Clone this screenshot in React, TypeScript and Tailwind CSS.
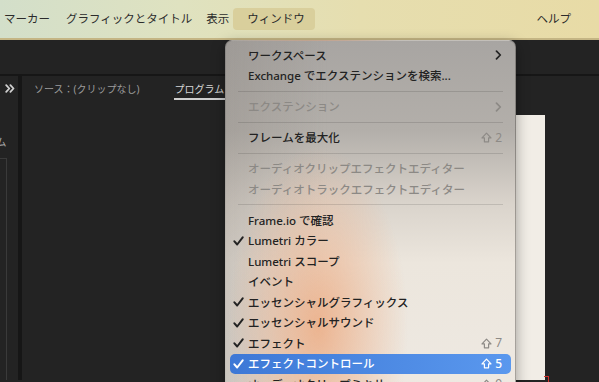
import React from "react";

type Item =
  | { kind: "sep" }
  | {
      kind: "item";
      label: string;
      checked?: boolean;
      disabled?: boolean;
      active?: boolean;
      submenu?: boolean;
      shortcut?: string;
    };

const items: Item[] = [
  { kind: "item", label: "ワークスペース", submenu: true },
  { kind: "item", label: "Exchange でエクステンションを検索..." },
  { kind: "sep" },
  { kind: "item", label: "エクステンション", submenu: true, disabled: true },
  { kind: "sep" },
  { kind: "item", label: "フレームを最大化", shortcut: "2" },
  { kind: "sep" },
  { kind: "item", label: "オーディオクリップエフェクトエディター", disabled: true },
  { kind: "item", label: "オーディオトラックエフェクトエディター", disabled: true },
  { kind: "sep" },
  { kind: "item", label: "Frame.io で確認" },
  { kind: "item", label: "Lumetri カラー", checked: true },
  { kind: "item", label: "Lumetri スコープ" },
  { kind: "item", label: "イベント" },
  { kind: "item", label: "エッセンシャルグラフィックス", checked: true },
  { kind: "item", label: "エッセンシャルサウンド", checked: true },
  { kind: "item", label: "エフェクト", checked: true, shortcut: "7" },
  { kind: "item", label: "エフェクトコントロール", checked: true, active: true, shortcut: "5" },
  { kind: "item", label: "オーディオクリップミキサー", shortcut: "9" },
];

const Check = () => (
  <svg width="11" height="10" viewBox="0 0 11 10" fill="none">
    <path d="M1.4 5.3 L4.2 8.5 L9.7 1.3" stroke="currentColor" strokeWidth="2" strokeLinecap="round" strokeLinejoin="round" />
  </svg>
);

const Chevron = () => (
  <svg width="7" height="10" viewBox="0 0 7 10" fill="none">
    <path d="M1.5 1.2 L5.3 5 L1.5 8.8" stroke="currentColor" strokeWidth="1.7" strokeLinecap="round" strokeLinejoin="round" />
  </svg>
);

const Shift = () => (
  <svg width="11" height="11" viewBox="0 0 11 11" fill="none">
    <path d="M5.5 1.2 L10 5.9 H7.6 V9.8 H3.4 V5.9 H1 Z" stroke="currentColor" strokeWidth="1.2" strokeLinejoin="round" />
  </svg>
);

const DoubleChevron = () => (
  <svg width="10" height="9" viewBox="0 0 10 9" fill="none">
    <path d="M1.2 1.2 L4.3 4.5 L1.2 7.8 M5.4 1.2 L8.5 4.5 L5.4 7.8" stroke="#d0d0d0" strokeWidth="1.8" strokeLinecap="round" strokeLinejoin="round" />
  </svg>
);

const MenuRow = ({ item }: { item: Extract<Item, { kind: "item" }> }) => {
  const color = item.active
    ? "text-white"
    : item.disabled
      ? "text-[#8c8985]"
      : "text-[#222222]";
  return (
    <div
      className={`mx-[4px] flex h-[20.5px] items-center rounded-[5px] pl-[3px] pr-[9px] ${color} ${
        item.active ? "bg-[linear-gradient(90deg,#3d78d6,#5a98ee)]" : ""
      }`}
    >
      <div className="flex w-[15px] items-center">{item.checked && <Check />}</div>
      <span className="flex-1 whitespace-nowrap text-[11.5px] font-medium leading-none">{item.label}</span>
      {item.submenu && <Chevron />}
      {item.shortcut && (
        <span
          className={`flex items-center gap-[3px] text-[12px] leading-none ${
            item.active ? "font-medium text-white" : "text-[#8d8a86]"
          }`}
        >
          <Shift />
          {item.shortcut}
        </span>
      )}
    </div>
  );
};

export default function App() {
  return (
    <div className="relative h-[382px] w-[599px] overflow-hidden bg-[#232323] font-['Noto_Sans','Noto_Sans_CJK_JP',sans-serif]">
      {/* menubar */}
      <div className="flex h-[40px] items-center border-b-[2px] border-[#c4b584] bg-[linear-gradient(90deg,#d3dfca_0%,#dfe2c0_30%,#e6deaf_60%,#e8dba6_100%)] text-[11.5px] text-[#2b2b2b]">
        <span className="ml-[4px]">マーカー</span>
        <span className="ml-[16px]">グラフィックとタイトル</span>
        <span className="ml-[14px]">表示</span>
        <span className="ml-[4px] flex h-[22px] w-[82px] items-center rounded-[4px] bg-[#d9cf9c] pl-[14px]">ウィンドウ</span>
        <span className="ml-auto mr-[28px]">ヘルプ</span>
      </div>

      {/* toolbar strip */}
      <div className="h-[36px] border-b-[2px] border-[#161616] bg-[#232323]" />

      {/* panels */}
      <div className="flex h-[304px]">
        <div className="flex w-[18px] flex-col">
          <div className="mt-[8px] pl-[5px]">
            <DoubleChevron />
          </div>
          <div className="mt-[44px] -ml-[4px] text-[10.5px] leading-none text-[#a8a8a8]">ム</div>
          <div className="mt-[10px] h-full w-[7px] border-r border-t border-[#3a3a3a]" />
        </div>
        <div className="w-[4px] bg-[#161616]" />
        <div className="flex flex-1 flex-col">
          <div className="flex h-[24px] items-end text-[10px] leading-none">
            <span className="ml-[12px] pb-[6px] text-[#9c9c9c]">ソース：(クリップなし)</span>
            <span className="ml-[34px] border-b-[2px] border-[#cfcfcf] pb-[4px] pl-[1px] pr-[3px] text-[#d6d6d6]">プログラム</span>
          </div>
          <div className="flex flex-1 justify-end pr-[54px] pt-[15px]">
            <div className="relative h-full w-[220px] bg-[#f1ede6]">
              <div className="absolute bottom-[-4px] right-[-4px] h-[8px] w-[5px] border-r border-t border-[#d0302a]" />
            </div>
          </div>
        </div>
      </div>

      {/* dropdown menu */}
      <div className="absolute left-[225px] top-[40px] h-[360px] w-[291px] rounded-[7px] border border-[rgba(0,0,0,0.18)] bg-[radial-gradient(ellipse_90px_180px_at_92px_285px,rgba(236,176,138,0.92),rgba(236,176,138,0)),linear-gradient(90deg,rgba(140,134,128,0.35),rgba(140,134,128,0)_35%),linear-gradient(180deg,#a8a5a2_0%,#b3afaa_25%,#d9d3cb_45%,#ece6dd_62%,#eee9e2_100%)] pt-[4px] shadow-[0_4px_14px_rgba(0,0,0,0.35)]">
        {items.map((item, i) =>
          item.kind === "sep" ? (
            <div key={i} className="flex h-[10.5px] items-center px-[12px]">
              <div className="h-px w-full bg-[rgba(0,0,0,0.12)]" />
            </div>
          ) : (
            <MenuRow key={i} item={item} />
          )
        )}
      </div>
    </div>
  );
}
